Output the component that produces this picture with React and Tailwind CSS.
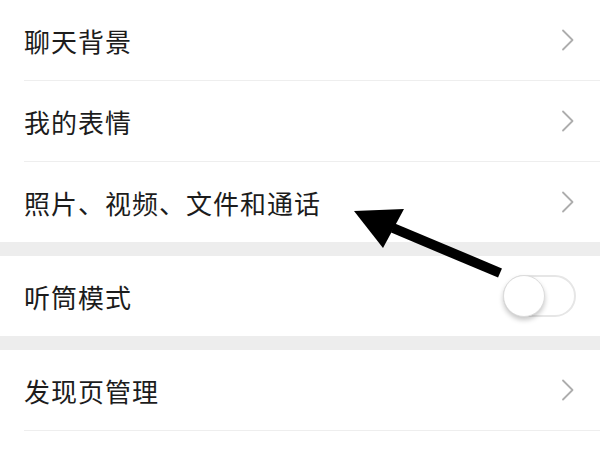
function Chevron() {
  return (
    <svg width="14" height="22" viewBox="0 0 14 22" fill="none" className="flex-shrink-0">
      <path d="M3 1.5l9.5 9.5L3 20.5" stroke="#adadad" strokeWidth="1.8" strokeLinecap="round" strokeLinejoin="round" />
    </svg>
  );
}

function Row({ label, children, divider }) {
  return (
    <div className="bg-white pl-6">
      <div className={`flex items-center justify-between pr-[26px] ${divider ? 'h-[81px] border-b border-[#eeeeee]' : 'h-20'}`}>
        <span className="text-[26px] tracking-[1px] text-[#1c1c1c]">{label}</span>
        {children}
      </div>
    </div>
  );
}

function Toggle() {
  return (
    <div className="relative w-[73px] h-[42px] rounded-full border-2 border-[#e6e6e6] bg-white mr-[-2px]">
      <div className="absolute left-[-2px] top-[-2px] w-[42px] h-[42px] rounded-full bg-white border border-[#dcdcdc] shadow-[0_3px_5px_rgba(0,0,0,0.22)]" />
    </div>
  );
}

export default function App() {
  return (
    <div
      className="relative w-[600px] h-[450px] bg-white overflow-hidden"
      style={{ fontFamily: '"Noto Sans CJK SC", "Noto Sans", sans-serif' }}
    >
      <Row label="聊天背景" divider><Chevron /></Row>
      <Row label="我的表情" divider><Chevron /></Row>
      <Row label="照片、视频、文件和通话"><Chevron /></Row>
      <div className="h-[14px] bg-[#ededed]" />
      <Row label="听筒模式"><Toggle /></Row>
      <div className="h-[14px] bg-[#ededed]" />
      <Row label="发现页管理" divider><Chevron /></Row>

      {/* 箭头 */}
      <svg className="absolute left-0 top-0 pointer-events-none" width="600" height="450" viewBox="0 0 600 450">
        <line x1="393" y1="228" x2="500" y2="273" stroke="#000" strokeWidth="10" />
        <polygon points="354,211 404,209 383,248" fill="#000" />
      </svg>
    </div>
  );
}
